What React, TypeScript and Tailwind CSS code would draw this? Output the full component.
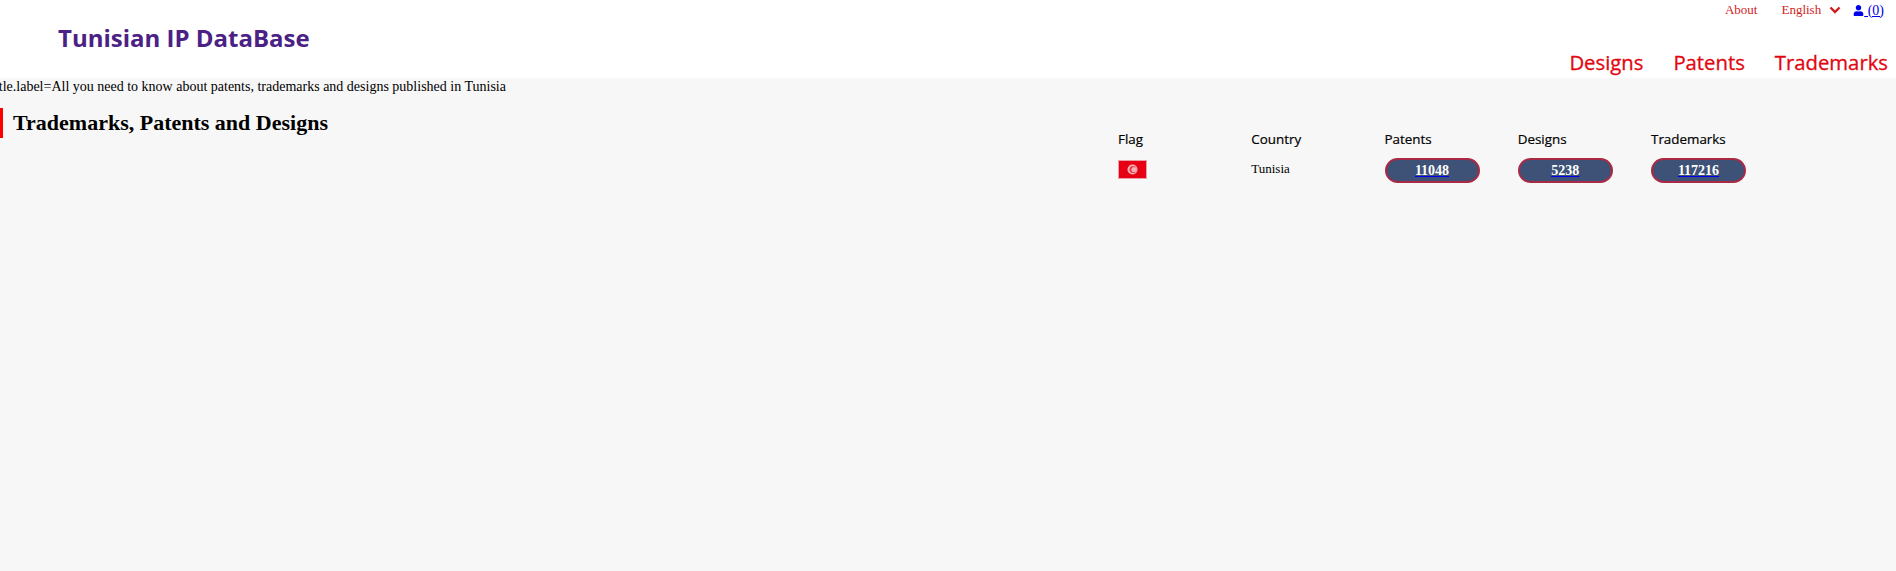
import React from "react";
import { FaUser } from "react-icons/fa";

function Pill({ n }: { n: string }) {
  return (
    <div className="w-[95px] h-[25px] rounded-[13px] border-2 border-[#a82a45] bg-[#3e5277] flex items-center justify-center font-bold text-[14px] text-white [font-family:'Liberation_Serif',serif]">
      <a className="underline decoration-[#0000ee]">{n}</a>
    </div>
  );
}

const heads = ["Flag", "Country", "Patents", "Designs", "Trademarks"];

export default function App() {
  return (
    <div className="min-h-[571px] bg-[#f7f7f7] [font-family:'Liberation_Serif',serif] text-black overflow-hidden">
      <header className="h-[78px] bg-white flex justify-between">
        <div className="pl-[58px] pt-[20px] text-[24px] leading-[36px] font-bold text-[#4b2185] [font-family:'Open_Sans',sans-serif]">
          Tunisian IP DataBase
        </div>
        <div className="flex flex-col items-end pr-[8px]">
          <div className="flex items-center h-[20px] text-[13px] pr-[4px]">
            <span className="text-[#d01c1c] mr-[24px]">About</span>
            <span className="text-[#d01c1c] mr-[8px]">English</span>
            <svg width="12" height="12" viewBox="0 0 12 12" className="mr-[12px]" fill="none" stroke="#d01c1c" strokeWidth="2.4"><path d="M1.5 3.5 6 8l4.5-4.5" /></svg>
            <a className="text-[#0000ee] text-[14px] underline flex items-center">
              <FaUser size={11} color="#0000ee" />
              <span>&nbsp;(0)</span>
            </a>
          </div>
          <nav className="mt-[28px] flex gap-[30px] text-[20.3px] leading-[28px] [-webkit-text-stroke:0.3px_#e3060f] text-[#e3060f] [font-family:'Open_Sans',sans-serif]">
            <span>Designs</span>
            <span>Patents</span>
            <span>Trademarks</span>
          </nav>
        </div>
      </header>
      <div className="ml-[-9px] text-[14px] leading-[18px] whitespace-nowrap">title.label=All you need to know about patents, trademarks and designs published in Tunisia</div>
      <div className="flex">
        <div className="w-[1118px] pt-[12px]">
          <h1 className="h-[30px] border-l-[3px] border-[#ff0000] pl-[10px] text-[22px] leading-[30px] font-bold">
            Trademarks, Patents and Designs
          </h1>
        </div>
        <div className="pt-[34px]">
          <div className="grid grid-cols-[133.25px_133.25px_133.25px_133.25px_133.25px] text-[13px]">
            {heads.map((h) => (
              <div key={h} className="h-[28px] text-[13.4px] leading-[18px] [-webkit-text-stroke:0.2px_#000] [font-family:'Open_Sans',sans-serif]">{h}</div>
            ))}
            <div className="h-[30px] flex items-start pt-[2px]">
              <svg width="29" height="19" viewBox="0 0 29 19">
                <rect width="29" height="19" fill="#e9a0a8" />
                <rect x="1" y="1" width="27" height="17" fill="#e70013" />
                <circle cx="14.5" cy="9.5" r="5" fill="#fff" opacity="0.7" />
                <circle cx="15" cy="9.5" r="3.5" fill="#e70013" opacity="0.7" />
                <circle cx="16" cy="9.5" r="2.6" fill="#fff" opacity="0.6" />
              </svg>
            </div>
            <div className="leading-[22px] text-[13px]">Tunisia</div>
            <Pill n="11048" />
            <Pill n="5238" />
            <Pill n="117216" />
          </div>
        </div>
      </div>
    </div>
  );
}
